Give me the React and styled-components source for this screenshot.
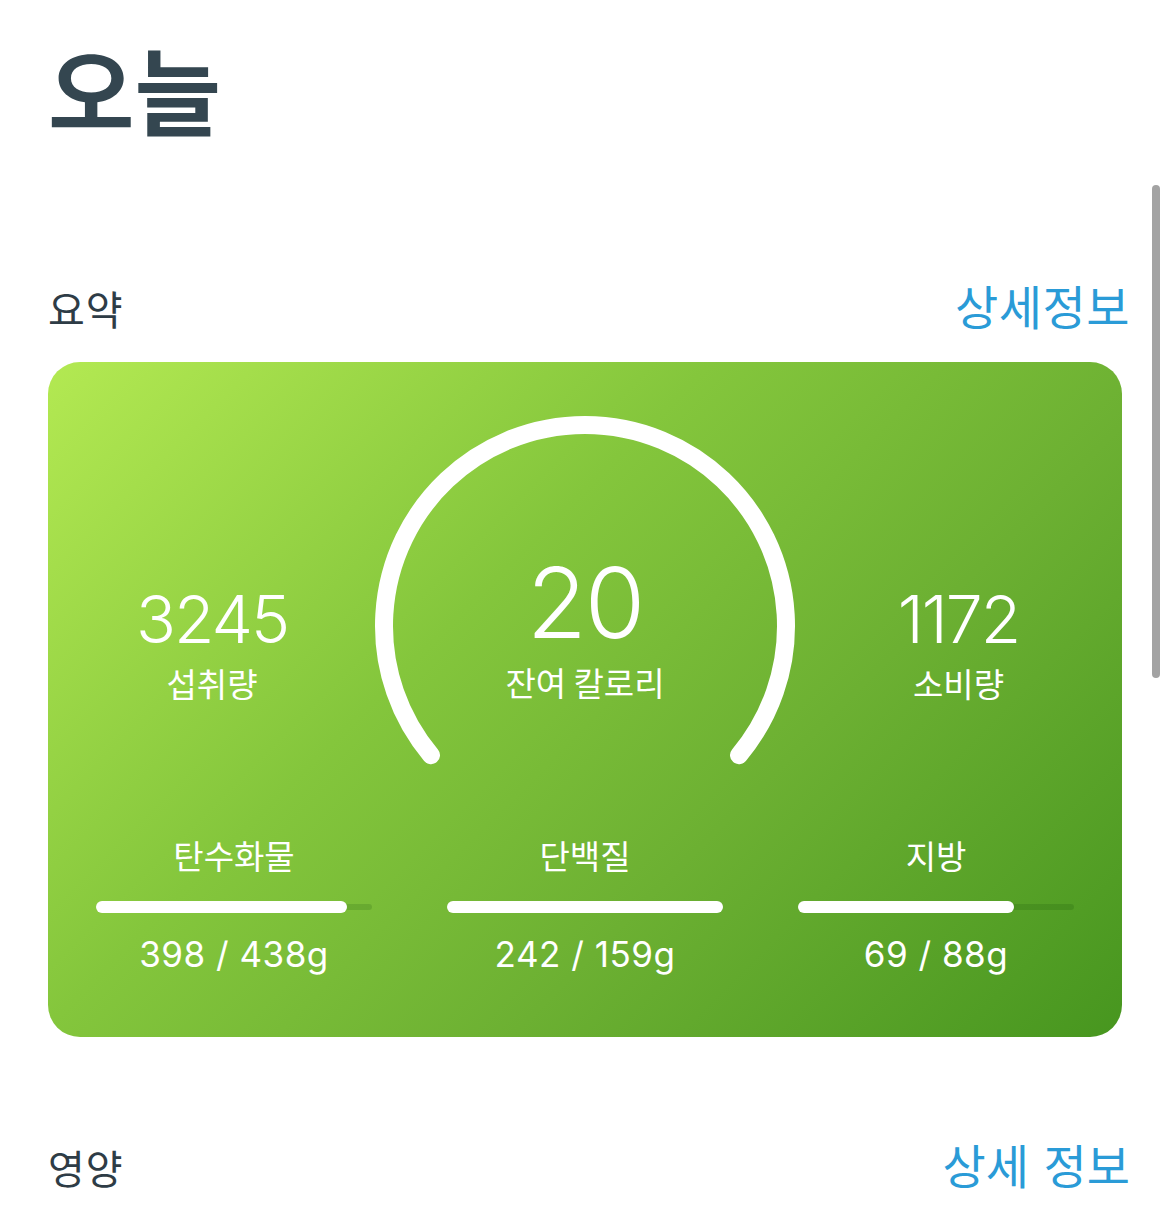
import React from 'react'
import styled, { createGlobalStyle } from 'styled-components'

const GlobalStyle = createGlobalStyle`
  html, body {
    margin: 0;
    padding: 0;
    background: #ffffff;
  }
  body {
    font-family: Inter, "Noto Sans CJK KR", sans-serif;
    -webkit-font-smoothing: antialiased;
  }
`

const Page = styled.div`
  position: relative;
  width: 1170px;
  min-height: 1215px;
  box-sizing: border-box;
  padding: 41px 48px 0 48px;
  overflow: hidden;
`

const Title = styled.h1`
  margin: 0;
  font-family: "Noto Sans CJK KR", sans-serif;
  font-size: 94px;
  line-height: 1;
  font-weight: 700;
  color: #344650;
`

const SectionHeader = styled.div`
  display: flex;
  align-items: flex-end;
  justify-content: space-between;
  margin-top: ${p => p.$top}px;
  margin-right: -8px;
`

const SectionTitle = styled.h2`
  margin: 0;
  font-family: "Noto Sans CJK KR", sans-serif;
  font-size: 40px;
  line-height: 1;
  font-weight: 400;
  color: #2e3c46;
  letter-spacing: 1px;
`

const MoreLink = styled.a`
  font-family: "Noto Sans CJK KR", sans-serif;
  font-size: 47px;
  line-height: 1;
  font-weight: 400;
  color: #2a9bd7;
  text-decoration: none;
  letter-spacing: ${p => (p.$spaced ? 0 : 0.5)}px;
  word-spacing: ${p => (p.$spaced ? 4 : 0)}px;
`

const Card = styled.div`
  margin-top: 34px;
  height: 675px;
  box-sizing: border-box;
  border-radius: 32px;
  padding-top: 44px;
  background: linear-gradient(135deg, #b3e952 0%, #84c63c 38%, #6cb032 65%, #47961f 100%);
  color: #ffffff;
  display: flex;
  flex-direction: column;
`

const TopRow = styled.div`
  display: grid;
  grid-template-columns: 1fr 440px 1fr;
  align-items: start;
`

const Stat = styled.div`
  display: flex;
  flex-direction: column;
  align-items: center;
  padding-top: 180px;
  padding-left: ${p => (p.$side === 'left' ? 11 : 0)}px;
  padding-right: ${p => (p.$side === 'right' ? 10 : 0)}px;
`

const StatValue = styled.div`
  font-family: Inter, sans-serif;
  font-size: 66px;
  font-weight: 300;
  line-height: 1;
  letter-spacing: -2px;
`

const StatLabel = styled.div`
  margin-top: ${p => (p.$gap ? p.$gap : 15)}px;
  font-family: "Noto Sans CJK KR", sans-serif;
  font-size: 33px;
  line-height: 1;
  font-weight: 400;
`

const Gauge = styled.div`
  display: grid;
  width: 440px;
  height: 370px;
  & > * {
    grid-area: 1 / 1;
  }
`

const GaugeText = styled.div`
  display: flex;
  flex-direction: column;
  align-items: center;
  padding-top: 148px;
`

const GaugeValue = styled.div`
  font-family: Inter, sans-serif;
  font-size: 98px;
  font-weight: 300;
  line-height: 1;
  letter-spacing: -2px;
`

const MacroRow = styled.div`
  display: grid;
  grid-template-columns: repeat(3, 1fr);
  column-gap: 75px;
  padding: 63px 48px 0 48px;
`

const Macro = styled.div`
  display: flex;
  flex-direction: column;
  align-items: center;
`

const MacroLabel = styled.div`
  font-family: "Noto Sans CJK KR", sans-serif;
  font-size: 33px;
  line-height: 1;
  font-weight: 400;
`

const Track = styled.div`
  width: 100%;
  height: 6px;
  margin-top: 32px;
  border-radius: 3px;
  background: rgba(0, 60, 0, 0.14);
  display: flex;
  align-items: center;
`

const Fill = styled.div`
  height: 12px;
  border-radius: 6px;
  background: #ffffff;
`

const MacroValue = styled.div`
  margin-top: 27px;
  font-family: Inter, sans-serif;
  font-size: 35px;
  line-height: 1;
  font-weight: 400;
  letter-spacing: 0.5px;
`

const Scrollbar = styled.div`
  position: absolute;
  top: 185px;
  right: 10px;
  width: 8px;
  height: 493px;
  border-radius: 4px;
  background: #a3a3a3;
`

const macros = [
  { name: '탄수화물', value: 398, goal: 438 },
  { name: '단백질', value: 242, goal: 159 },
  { name: '지방', value: 69, goal: 88 },
]

function arcPath(cx, cy, r, startDeg, endDeg) {
  const rad = d => (d * Math.PI) / 180
  const x1 = cx + r * Math.cos(rad(startDeg))
  const y1 = cy + r * Math.sin(rad(startDeg))
  const x2 = cx + r * Math.cos(rad(endDeg))
  const y2 = cy + r * Math.sin(rad(endDeg))
  const large = endDeg - startDeg > 180 ? 1 : 0
  return `M ${x1} ${y1} A ${r} ${r} 0 ${large} 1 ${x2} ${y2}`
}

function GaugeArc() {
  return (
    <svg width="440" height="370" viewBox="0 0 440 370">
      <path
        d={arcPath(220, 220, 201, 140, 400)}
        fill="none"
        stroke="#ffffff"
        strokeWidth="18"
        strokeLinecap="round"
      />
    </svg>
  )
}

export default function App() {
  return (
    <Page>
      <GlobalStyle />
      <Title>오늘</Title>

      <SectionHeader $top={146}>
        <SectionTitle>요약</SectionTitle>
        <MoreLink href="#">상세정보</MoreLink>
      </SectionHeader>

      <Card>
        <TopRow>
          <Stat $side="left">
            <StatValue>3245</StatValue>
            <StatLabel>섭취량</StatLabel>
          </Stat>
          <Gauge>
            <GaugeArc />
            <GaugeText>
              <GaugeValue>20</GaugeValue>
              <StatLabel $gap={14}>잔여 칼로리</StatLabel>
            </GaugeText>
          </Gauge>
          <Stat $side="right">
            <StatValue>1172</StatValue>
            <StatLabel>소비량</StatLabel>
          </Stat>
        </TopRow>

        <MacroRow>
          {macros.map(m => (
            <Macro key={m.name}>
              <MacroLabel>{m.name}</MacroLabel>
              <Track>
                <Fill style={{ width: `${Math.min(1, m.value / m.goal) * 100}%` }} />
              </Track>
              <MacroValue>
                {m.value} / {m.goal}g
              </MacroValue>
            </Macro>
          ))}
        </MacroRow>
      </Card>

      <SectionHeader $top={103}>
        <SectionTitle>영양</SectionTitle>
        <MoreLink href="#" $spaced>상세 정보</MoreLink>
      </SectionHeader>

      <Scrollbar />
    </Page>
  )
}
